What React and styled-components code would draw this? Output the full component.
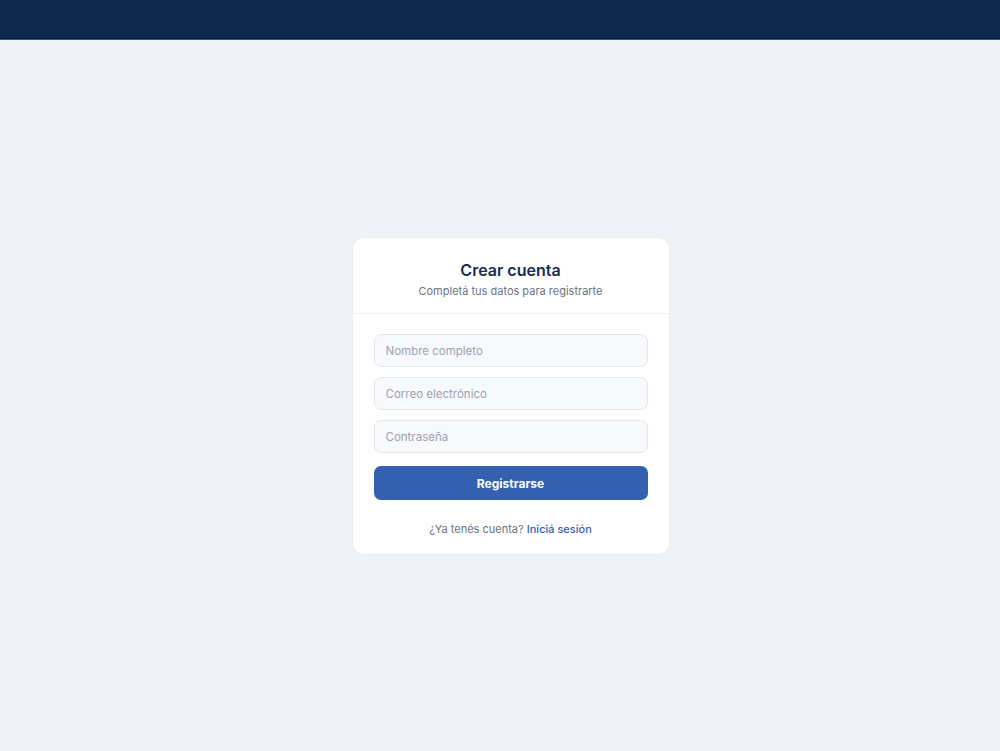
import React from "react";
import styled, { createGlobalStyle } from "styled-components";

const GlobalStyle = createGlobalStyle`
  html, body {
    margin: 0;
    padding: 0;
    height: 100%;
  }
  body {
    font-family: Inter, "Open Sans", "Liberation Sans", sans-serif;
    background: #eff3f8;
  }
  #root {
    min-height: 100vh;
    display: flex;
    flex-direction: column;
  }
`;

const App = () => {
  return (
    <>
      <GlobalStyle />
      <TopBar />
      <StyledMain>
        <StyledCard>
          <StyledHeader>
            <h1>Crear cuenta</h1>
            <p>Completá tus datos para registrarte</p>
          </StyledHeader>
          <StyledForm onSubmit={(e) => e.preventDefault()}>
            <StyledInput type="text" placeholder="Nombre completo" />
            <StyledInput type="email" placeholder="Correo electrónico" />
            <StyledInput type="password" placeholder="Contraseña" />
            <StyledButton type="submit">Registrarse</StyledButton>
            <StyledFooter>
              ¿Ya tenés cuenta? <a href="#">Iniciá sesión</a>
            </StyledFooter>
          </StyledForm>
        </StyledCard>
      </StyledMain>
    </>
  );
};

//styled components
const TopBar = styled.header`
  height: 39px;
  background: #0e284c;
  border-bottom: 1px solid #3b5273;
  flex-shrink: 0;
`;

const StyledMain = styled.main`
  flex: 1;
  display: flex;
  align-items: center;
  justify-content: center;
  padding-left: 21px;
  padding-top: 1px;
`;

const StyledCard = styled.div`
  width: 318px;
  background: #ffffff;
  border-radius: 12px;
  border: 1px solid #e9edf3;
  box-sizing: border-box;
  overflow: hidden;
`;

const StyledHeader = styled.div`
  padding: 22px 20px 14px;
  text-align: center;
  border-bottom: 1px solid #edf0f4;
  h1 {
    margin: 0;
    font-size: 16px;
    font-weight: 600;
    color: #182d52;
    line-height: 20px;
  }
  p {
    margin: 3px 0 0;
    font-size: 11px;
    color: #6b7280;
    line-height: 16px;
  }
`;

const StyledForm = styled.form`
  padding: 20px 21px 17px;
  display: flex;
  flex-direction: column;
  gap: 10px;
`;

const StyledInput = styled.input`
  height: 33px;
  box-sizing: border-box;
  padding: 0 11px;
  border: 1px solid #e2e7ef;
  border-radius: 7px;
  background: #f7f9fc;
  font-family: inherit;
  font-size: 11.5px;
  color: #1f2937;
  outline: none;
  &::placeholder {
    color: #9ca3af;
  }
`;

const StyledButton = styled.button`
  margin-top: 3px;
  height: 34px;
  border: none;
  border-radius: 7px;
  background: #3361b0;
  color: #ffffff;
  font-family: inherit;
  font-size: 12px;
  font-weight: 700;
  cursor: pointer;
`;

const StyledFooter = styled.p`
  margin: 11px 0 0;
  text-align: center;
  font-size: 11px;
  color: #6b7280;
  line-height: 16px;
  a {
    color: #3361b0;
    text-decoration: none;
    font-weight: 500;
  }
`;

export default App;
